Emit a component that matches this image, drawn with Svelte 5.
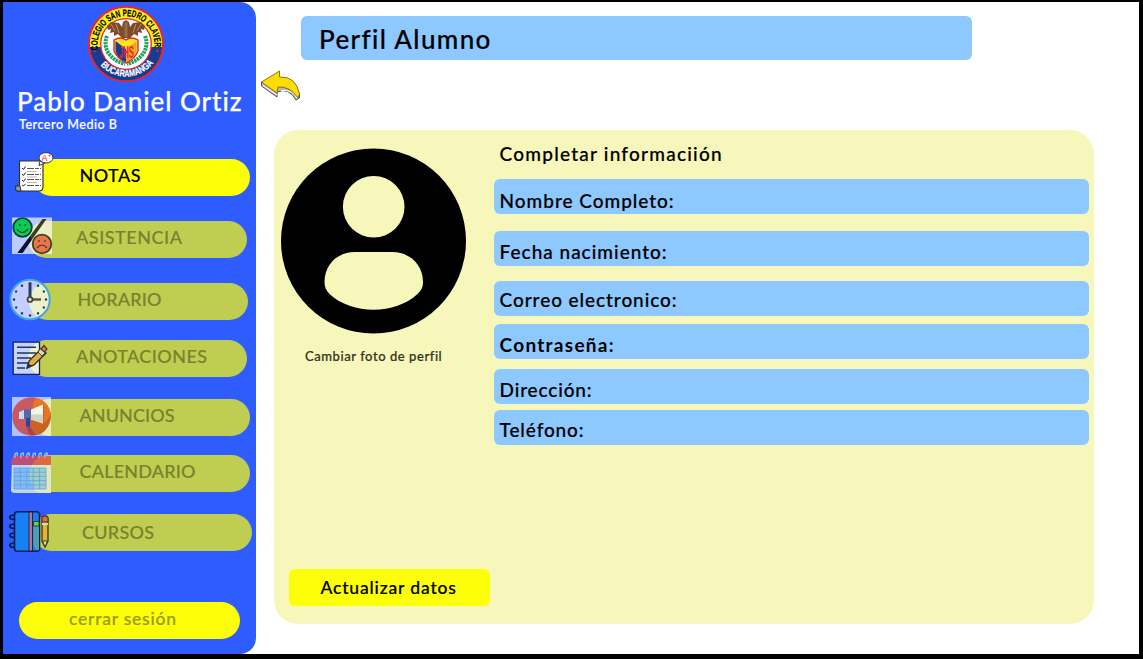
<script>
  const nav = [
    { id: 'notas', label: 'NOTAS', left: 30, width: 217, gap: 0, indent: 46.5, text: 61, icon: 11.5, drop: 1, lift: -2.5 },
    { id: 'asistencia', label: 'ASISTENCIA', left: 25, width: 219, gap: 25, indent: 48, text: 106, icon: 8, drop: 0, lift: -2.5 },
    { id: 'horario', label: 'HORARIO', left: 26, width: 219, gap: 24.8, indent: 48.5, text: 84, icon: 6, drop: 3.5, lift: -2 },
    { id: 'anotaciones', label: 'ANOTACIONES', left: 25, width: 219, gap: 20.6, indent: 48, text: 131, icon: 8, drop: 4, lift: -2.5 },
    { id: 'anuncios', label: 'ANUNCIOS', left: 28, width: 219, gap: 22, indent: 48.5, text: 95, icon: 8, drop: 3.5, lift: -2.5 },
    { id: 'calendario', label: 'CALENDARIO', left: 27, width: 220, gap: 19, indent: 49.5, text: 116, icon: 7, drop: 4.5, lift: -2.5 },
    { id: 'cursos', label: 'CURSOS', left: 30, width: 219, gap: 22, indent: 49, text: 72, icon: 6, drop: 3.5, lift: -0.5 }
  ];
  const fields = [
    { label: 'Nombre Completo:', text: 174, gap: 0, drop: 4.4 },
    { label: 'Fecha nacimiento:', text: 167, gap: 17.5, drop: 4.2 },
    { label: 'Correo electronico:', text: 177, gap: 15.5, drop: 2 },
    { label: 'Contraseña:', text: 114, gap: 8.6, drop: 3.8, strong: true },
    { label: 'Dirección:', text: 92, gap: 10.5, drop: 3.6 },
    { label: 'Teléfono:', text: 84, gap: 6.2, drop: 3.3 }
  ];
  const days = [0, 1, 2, 3, 4, 5];
  const hours = [0, 30, 60, 90, 120, 150, 180, 210, 240, 270, 300, 330];

  // Spreads the letters so that the label takes the given width.
  function fit(node, width) {
    node.style.letterSpacing = '0px';
    const natural = node.getBoundingClientRect().width;
    const count = node.textContent.length;
    node.style.letterSpacing = (width - natural) / (count - 1) + 'px';
  }
</script>

<div class="frame">
  <aside>
    <svg class="crest" viewBox="0 0 78 78">
      <defs>
        <path id="arc-top" d="M11.2 46A28.500 28.500 0 1 1 66.8 46" />
        <path id="arc-bottom" d="M7 50A34.5 34.5 0 0 0 71 50" />
      </defs>
      <circle cx="39" cy="39" r="37.2" fill="#fff01c" stroke="#e32636" stroke-width="2" />
      <path d="M2.7 42A36.4 36.4 0 0 0 75.3 42Z" fill="#173b91" />
      <path d="M1.8 39A37.2 37.2 0 0 0 76.2 39" fill="none" stroke="#e32636" stroke-width="1.6" />
      <circle cx="39" cy="39" r="25.3" fill="#fff" stroke="#e32636" stroke-width="1.3" />
      <circle cx="7.5" cy="46" r="1.2" fill="#e32636" /><circle cx="70.5" cy="46" r="1.2" fill="#e32636" />
      <g fill="none" stroke="#23a35a" stroke-width="4" stroke-dasharray="2.4 .7">
        <path d="M20 31C15 43 23 55 38 59" /><path d="M58 31C63 43 55 55 40 59" />
      </g>
      <path fill="#7a4a2c" d="M36 17L39 15 42 17 43 22 46 18 54 17 58 21 57 25 54 24 55 28 51 27 51 31 47 29 43 33H35L31 29 27 31 27 27 23 28 24 24 21 25 20 21 24 17 32 18 35 22Z" />
      <path d="M24 19L28 26M29 19L32 28M49 19L46 28M54 19L50 26" stroke="#c88e58" />
      <path d="M39 17V32" stroke="#a0522d" stroke-width="4" /><path d="M39 18V32" stroke="#55a06a" />
      <path d="M27 35Q34 31 39 35Q44 31 51 35V46Q48 54 39 58Q30 53 27 46Z" fill="#ffe321" stroke="#e32636" stroke-width="1.4" />
      <path d="M28.500 36L39 44 39 57Q30 53 28.500 46Z" fill="#173b91" />
      <path d="M39 44L49.500 36V46Q47 53 39 57Z" fill="#f6a51e" />
      <text x="32" y="53" class="mono" textLength="15" lengthAdjust="spacingAndGlyphs">JHS</text>
      <text class="ring"><textPath href="#arc-top" startOffset="1" textLength="97" lengthAdjust="spacingAndGlyphs">COLEGIO SAN PEDRO CLAVER</textPath></text>
      <text class="ring low"><textPath href="#arc-bottom" startOffset="12.5" textLength="60" lengthAdjust="spacingAndGlyphs">BUCARAMANGA</textPath></text>
    </svg>
    <h2><span use:fit={225}>Pablo Daniel Ortiz</span></h2>
    <p class="grade"><span use:fit={98}>Tercero Medio B</span></p>

    <nav>
      {#each nav as item, i}
        <a class="item" class:active={i === 0} style="margin-top:{item.gap}px;margin-left:{item.left}px;width:{item.width}px;padding-left:{item.indent}px">
          <span class="nav-label" style="margin-top:{item.lift * 2}px" use:fit={item.text}>{item.label}</span>
          <span class="icon" style="left:{item.icon - item.left}px;top:{item.drop - 8}px">
            {#if item.id === 'notas'}
              <svg width="42" height="44" viewBox="0 0 42 44">
                <path d="M4.5 9H28V35Q28 39 24 39H3Q-.5 39 .5 34H4.5Z" fill="#fff" stroke="#333" stroke-width="1.2" />
                <path d="M.8 34H5L6 39H3Q0 39 .8 34Z" fill="#999" stroke="#333" />
                <path d="M7 16l1.5 1.500 2-3M7 22l1.5 1.500 2-3M7 28l1.5 1.500 2-3M7 33l1.5 1 2-2" fill="none" stroke="#222" />
                <path d="M12 16.500H26M12 22.500H26M12 27.500H26M12 33.500H26" stroke="#555" stroke-dasharray="7 1 4 1" />
                <path d="M12 19.500H22M12 25H22M12 30.500H22" stroke="#aaa" stroke-width=".8" />
                <path d="M24 13.500L25 9 30 11Z" fill="#fff" stroke="#333" />
                <ellipse cx="31" cy="5.800" rx="7" ry="5.200" fill="#fff" stroke="#333" />
                <text x="26.500" y="9.300" class="mark">A⁺</text>
              </svg>
            {:else if item.id === 'asistencia'}
              <svg width="42" height="44" viewBox="0 0 42 44">
                <rect x="1" y="4.5" width="40" height="36.5" fill="#fff" opacity=".68" />
                <path d="M31.500 6H35.500L11.500 40H6.500Z" fill="#3c3f1d" />
                <path d="M19 23.500L20.500 27 11.500 40H6.500Z" fill="#07123f" />
                <circle cx="11.5" cy="14.5" r="9.3" fill="#08cd50" stroke="#063f3c" stroke-width="1.8" />
                <path d="M6 16Q11 23 17 16M8.8 11V13M14.3 11V13" fill="none" stroke="#063f3c" stroke-width="1.2" />
                <circle cx="31" cy="31" r="9.3" fill="#ed7348" stroke="#3f4124" stroke-width="1.8" />
                <path d="M26 35Q31 29 36 35M28 27V29M34 27V29" fill="none" stroke="#3f4124" stroke-width="1.2" />
              </svg>
            {:else if item.id === 'horario'}
              <svg width="42" height="44" viewBox="0 0 42 44">
                <circle cx="21" cy="21.5" r="19.7" fill="#fff" fill-opacity=".71" stroke="#40a9df" stroke-width="2" />
                {#each hours as h}<circle cx="21" cy="5.5" r="1.2" fill="#273452" transform="rotate({h} 21 21.5)" />{/each}
                <path d="M21 21.5V4.5" stroke="#303c60" stroke-width="3" /><path d="M22 21.5H32" stroke="#55573c" stroke-width="2.4" />
                <circle cx="21" cy="21.5" r="2.5" fill="#dce0cb" stroke="#3b4144" stroke-width="1.7" />
              </svg>
            {:else if item.id === 'anotaciones'}
              <svg width="42" height="44" viewBox="0 0 42 44">
                <path d="M2.2 6.2H28.5V38.3H2.2Z" fill="#fff" fill-opacity=".73" stroke="#152459" stroke-width="1.3" />
                <path d="M6 11.3H25M6 17H25M6 22H20M6 27H17M6 32H14" stroke="#24315e" stroke-width="1.5" />
                <path d="M16 32L18 25 30 13 35 17 23 29Z" fill="#e4ad42" stroke="#303121" stroke-width="1.4" />
                <path d="M27 16L30 12 34 17 31 20Z" fill="#d3d8c5" stroke="#4b4b32" />
                <path d="M30 13L33 9.5 36 13 33.5 16Z" fill="#ef7850" stroke="#4b3426" stroke-width="1.2" />
                <path d="M17 27L21 30 15.5 33Z" fill="#26304c" />
              </svg>
            {:else if item.id === 'anuncios'}
              <svg width="42" height="44" viewBox="0 0 42 44">
                <path d="M1 2H40V41H1Z" fill="#fff" opacity=".62" />
                <circle cx="20.5" cy="21.5" r="19.3" fill="#c65962" />
                <path d="M20 24L32 9L39.600 18Q40.500 28 33 36.500Q29 40 25 40L22 32Z" fill="#ca641b" />
                <path d="M19 32L25 40Q21 41 18 39L15 31Z" fill="#a8434c" />
                <path d="M25 3Q38 6 39.8 20L33 29V10L22 14Q21 8 25 3Z" fill="#e77524" />
                <path d="M8 17L13 15V24H8Z" fill="#cfd9ee" />
                <path d="M13 14.500H20V24H13Z" fill="#5368a4" /><path d="M15 23H19V32L15 31Z" fill="#28478f" />
                <path d="M20 14.500L32 9.500V28.500L20 24.500Z" fill="#f5f6e5" /><path d="M20 19.500H32V28.500L20 24.500Z" fill="#ced4c1" />
              </svg>
            {:else if item.id === 'calendario'}
              <svg width="42" height="44" viewBox="0 0 42 44">
                <path d="M2 6H41V39Q41 41 38 41H5Q1 41 1 38Z" fill="#c5d3ef" />
                <path d="M22 13H41V41H29Q19 37 19 25Q19 18 22 13Z" fill="#dfe9c9" />
                <path d="M2 6Q2 4 4 4H39Q41 4 41 6V13H1Z" fill="#bd4e76" /><path d="M22 13Q25 7 31 4H39L41 6V13Z" fill="#df6744" />
                <path d="M4 16H36V37H4Z" fill="#83baf5" /><path d="M20.500 16H36V37H24Q18 27 20.500 16Z" fill="#a2cfc4" />
                {#each days as d}<path d="M{4 + d * 6.4} 16V37M4 {16 + d * 4.2}H36" stroke="#5aa3df" stroke-width=".8" />{/each}
                {#each days as d}<path d="M{5 + d * 6} 6q-1-5 2-5q1 1 0 3" fill="none" stroke="#9bc6d9" stroke-width="1.3" />{/each}
              </svg>
            {:else}
              <svg width="42" height="44" viewBox="0 0 42 44">
                <rect x="5.5" y="1.8" width="25" height="39.5" rx="3" fill="#1780f5" stroke="#101d46" stroke-width="1.6" />
                <path d="M24.5 12H30V40H28Q25 38 24.5 34Z" fill="#4ba2ae" />
                <path d="M20 2H23.5V41H20Z" fill="#bd7189" stroke="#172757" /><path d="M24.5 11.5H30V16H24.5Z" fill="#69d443" stroke="#244345" />
                <path d="M6 5Q0 5 1 8Q2 10 6 9M6 14Q0 14 1 17Q2 19 6 18M6 23Q0 23 1 26Q2 28 6 27M6 33Q0 33 1 36Q2 38 6 37" fill="none" stroke="#101d46" stroke-width="1.7" />
                <path d="M33 9Q33 6 36 6Q39 6 39 9V31L36 37 33 31Z" fill="#e2b239" stroke="#37391f" stroke-width="1.3" />
                <path d="M33 12V8Q33 6 36 6Q39 6 39 8V12Z" fill="#e36b42" stroke="#493320" /><path d="M33 13H39V15H33Z" fill="#b9e8bb" />
                <path d="M33.5 31H38.5L36 37Z" fill="#dde2b0" stroke="#37391f" />
              </svg>
            {/if}
          </span>
        </a>
      {/each}
    </nav>
    <button class="logout"><span use:fit={107}>cerrar sesión</span></button>
  </aside>

  <main>
    <h1><span use:fit={171}>Perfil Alumno</span></h1>
    <svg class="back" width="42" height="34" viewBox="0 0 42 34">
      <path d="M1.5 13V17L17 28V23Q29 18 36 31L39.500 29V24L18 16Z" fill="#b9b9b9" stroke="#555" />
      <path d="M3 16.500L17 26M21 21.500Q32 20 37 29" fill="none" stroke="#fff" stroke-width="1" />
      <path d="M1.5 13L19.5 2V8Q36 7 39.500 25L38 29Q30 17 18 18L17 24Z" fill="#fd0" stroke="#776a18" stroke-width=".9" />
    </svg>
    <section>
      <div class="photo">
        <svg width="186" height="186" viewBox="0 0 186 186">
          <circle cx="93.500" cy="93" r="92.5" />
          <circle cx="93.700" cy="58.8" r="30.8" fill="#f7f7bb" />
          <path d="M44.500 134C44.500 117 57 104 75 104H112C130 104 143 117 143 134C143 139 141.500 142 137.500 146C115 167 72 167 49.500 146C46 142 44.500 139 44.500 134Z" fill="#f7f7bb" />
        </svg>
        <p><span use:fit={136.5}>Cambiar foto de perfil</span></p>
        <button class="update"><span use:fit={135.5}>Actualizar datos</span></button>
      </div>
      <div class="form">
        <h3><span use:fit={222}>Completar informaciión</span></h3>
        {#each fields as f}
          <div class="field" class:strong={f.strong} style="margin-top:{f.gap}px;padding-top:{f.drop}px"><span use:fit={f.text}>{f.label}</span></div>
        {/each}
      </div>
    </section>
  </main>
</div>

<style>
  :global(body) { margin: 0; background: #000; }
  * { box-sizing: border-box; }
  h1, h2, h3, p { margin: 0; font-weight: 500; }
  span { display: inline-block; white-space: nowrap; }
  .frame {
    width: 1143px; height: 659px; padding: 2px 4px 5px 3px; display: flex; overflow: hidden;
    background: linear-gradient(#fff, #fff) content-box, #000;
    font-family: Lato, sans-serif; font-weight: 500; color: #000;
  }
  aside {
    width: 253px; height: 652px; background: #2f5cff; border-radius: 0 16px 16px 0;
    display: flex; flex-direction: column; flex: none; color: #fff;
  }
  .crest { width: 78px; height: 78px; margin: 3px 0 0 83.500px; flex: none; }
  .ring { font: 700 9.500px "Liberation Sans", sans-serif; fill: #000; stroke: #000; stroke-width: .2px; }
  .low { fill: #fff; stroke: #fff; }
  .mono { font: 700 16px "Liberation Sans", sans-serif; fill: #e32636; }
  .mark { font: 9px "Liberation Sans", sans-serif; fill: #e8202a; }
  h2 { font-size: 26px; line-height: 32px; height: 32px; padding-left: 14px; margin-top: 1.500px; -webkit-text-stroke: .25px; }
  .grade { font-size: 12.500px; line-height: 16px; height: 16px; padding-left: 16px; margin-top: .5px; -webkit-text-stroke: .2px; }
  nav { margin-top: 25.900px; }
  .item {
    position: relative; display: flex; align-items: center; height: 37px;
    border-radius: 19px; background: #bfce51; color: #79822f;
  }
  .item.active { background: #fdff08; color: #000; }
  .nav-label { font: 500 18px/24px Lato, sans-serif; -webkit-text-stroke: .15px; }
  .icon { position: absolute; width: 42px; height: 44px; }
  .icon svg, .photo svg { display: block; }
  button { border: 0; padding: 0; font: 500 17.500px/24px Lato, sans-serif; -webkit-text-stroke: .2px; }
  .logout {
    width: 221px; height: 37.500px; margin: 50.300px 0 0 16px; padding: 0 0 3px 50px; text-align: left;
    background: #fdff08; color: #999b08; border-radius: 19px;
  }
  main { flex: 1; display: flex; flex-direction: column; align-items: flex-start; }
  h1 {
    width: 671px; height: 44px; margin: 14px 0 0 45px; padding: 1px 0 0 18px; border-radius: 6px;
    background: #8dc8ff; font-size: 26px; line-height: 44px; -webkit-text-stroke: .2px;
  }
  .back { margin: 9px 0 0 4px; }
  section {
    width: 820px; height: 494px; margin: 27.100px 0 0 18px; border-radius: 24px;
    background: #f7f7bb; display: flex;
  }
  .photo { width: 219.600px; display: flex; flex-direction: column; padding: 18px 0 0 6px; align-items: flex-start; }
  .photo p { margin: 14px 0 0 25px; font-size: 13px; line-height: 16px; color: #333421; -webkit-text-stroke: .2px; }
  .update {
    margin: 204.900px 0 0 8.600px; padding: 1px 1px 0 0; width: 201px; height: 37px;
    border-radius: 6px; background: #fdff08; color: #000;
  }
  .form { width: 595.500px; }
  h3 { padding: 11.400px 0 0 6px; height: 49.200px; font-size: 19px; line-height: 26px; -webkit-text-stroke: .2px; }
  .field {
    height: 34.500px; border-radius: 6px; background: #8dc8ff; padding-left: 6px;
    font-size: 19px; line-height: 34.500px; -webkit-text-stroke: .2px;
  }
  .strong { font-weight: 700; -webkit-text-stroke: 0; }
</style>
